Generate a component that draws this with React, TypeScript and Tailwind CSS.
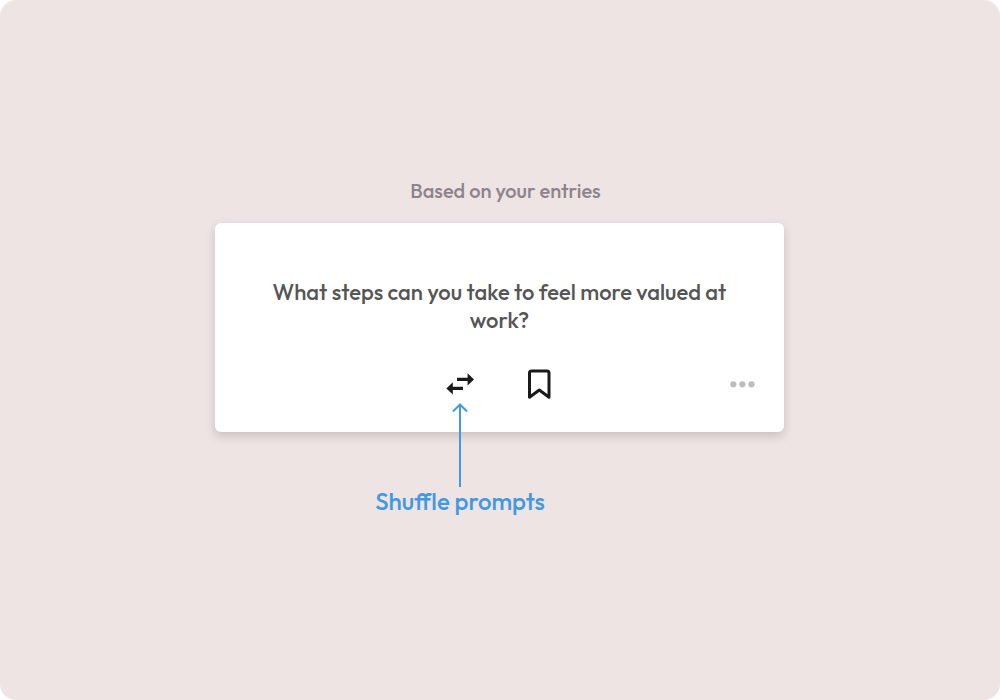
import type { ReactNode } from "react";

type IconButtonProps = {
  label: string;
  describedBy?: string;
  className: string;
  children: ReactNode;
};

function IconButton({ label, describedBy, className, children }: IconButtonProps) {
  return (
    <button
      type="button"
      aria-label={label}
      aria-describedby={describedBy}
      className={`flex items-center justify-center cursor-pointer ${className}`}
    >
      {children}
    </button>
  );
}

function ShuffleIcon() {
  return (
    <svg width="28" height="22" viewBox="0 0 28 22" fill="currentColor" aria-hidden="true">
      <path d="M21.6 0.2 28 6.4l-6.4 6.2V8H11V4.8h10.6z" />
      <path d="M6.8 9.2 0.4 15.4l6.4 6.2V17H17v-3.2H6.8z" />
    </svg>
  );
}

function BookmarkIcon() {
  return (
    <svg width="24" height="30" viewBox="0 0 24 30" fill="none" stroke="currentColor" strokeWidth="3" strokeLinejoin="round" aria-hidden="true">
      <path d="M1.5 4Q1.5 2 3.5 2h15.5q2 0 2 2v24.2l-9.7-7.2L1.5 28.2z" />
    </svg>
  );
}

function MoreIcon() {
  return (
    <svg width="25" height="7" viewBox="0 0 25 7" fill="currentColor" aria-hidden="true">
      <circle cx="3.3" cy="3.3" r="3.1" />
      <circle cx="12.4" cy="3.3" r="3.1" />
      <circle cx="21.5" cy="3.3" r="3.1" />
    </svg>
  );
}

// Callout that hangs below the shuffle button
function ShuffleHint() {
  return (
    <div className="pointer-events-none absolute top-full left-1/2 flex w-44 -translate-x-1/2 flex-col items-center pt-1 text-[#4299e1]">
      <svg width="16" height="84" viewBox="0 0 16 84" fill="none" stroke="currentColor" strokeWidth="2" aria-hidden="true">
        <path d="M8 84V1.5M1 8.5l7-7 7 7" />
      </svg>
      <span id="shuffle-hint" className="text-2xl leading-7 font-medium whitespace-nowrap">
        Shuffle prompts
      </span>
    </div>
  );
}

export default function App() {
  return (
    <div className="min-h-screen bg-white font-['Outfit','Lato',sans-serif]">
      <main className="flex min-h-screen flex-col items-center rounded-2xl bg-[#ede4e3] pt-[179px] pr-[17px] pl-4">
        <p className="pl-3 text-xl leading-6 font-medium text-[#8e828c]">Based on your entries</p>

        <section className="mt-5 w-full max-w-[569px] rounded-md bg-white pt-[55px] pb-[33px] shadow-[0_4px_10px_rgba(90,60,70,0.22)]">
          <h1 className="px-12 text-center text-[22px] leading-7 font-medium text-[#555555]">
            What steps can you take to feel more valued at work?
          </h1>

          <div className="mt-[35px] grid grid-cols-[1fr_auto_1fr] items-center px-[29px]">
            <div className="relative col-start-2 flex items-center gap-[53px] text-[#1a1a1a]">
              <div className="relative">
                <IconButton label="Shuffle" describedBy="shuffle-hint" className="h-[30px] w-7">
                  <ShuffleIcon />
                </IconButton>
                <ShuffleHint />
              </div>
              <IconButton label="Bookmark" className="h-[30px] w-[26px]">
                <BookmarkIcon />
              </IconButton>
            </div>
            <IconButton label="More options" className="h-[30px] justify-self-end text-[#bdbdbd]">
              <MoreIcon />
            </IconButton>
          </div>
        </section>
      </main>
    </div>
  );
}
